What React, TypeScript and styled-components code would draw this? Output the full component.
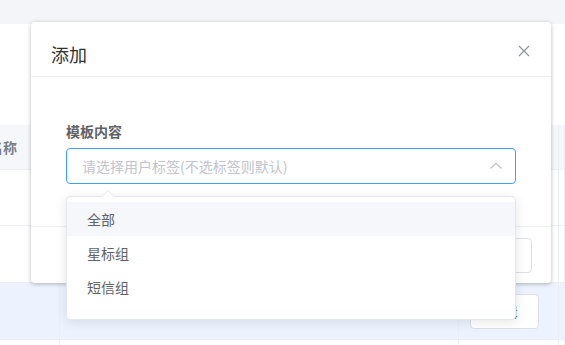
import React from "react";
import styled, { createGlobalStyle } from "styled-components";

const Global = createGlobalStyle`
  html, body { margin: 0; padding: 0; background: #fff; }
  body { font-family: "Noto Sans CJK SC", "Noto Sans", "Liberation Sans", sans-serif; }
  * { box-sizing: border-box; }
`;

const Page = styled.div`
  position: relative;
  width: 565px;
  height: 345px;
  overflow: hidden;
  background: #fff;
`;

const TopBand = styled.div`
  height: 24px;
  background: #f4f5f9;
`;

const FilterArea = styled.div`
  height: 101px;
`;

const Table = styled.div`
  display: grid;
  grid-template-columns: 60px 399px 100px 1fr;
`;

const Cell = styled.div<{ $kind?: "head" | "body" | "hover"; $h: number }>`
  height: ${(p) => p.$h}px;
  border-bottom: 1px solid #ebeef5;
  border-right: 1px solid #ebeef5;
  background: ${(p) =>
    p.$kind === "head" ? "#f5f7fb" : p.$kind === "hover" ? "#ecf3fe" : "#fff"};
  display: flex;
  align-items: center;
  font-size: 14px;
  font-weight: 700;
  color: #7b7e86;
`;

const HeadText = styled.span`
  margin-left: -11px;
  white-space: nowrap;
`;

const RowButton = styled.button`
  margin-left: 11px;
  width: 69px;
  height: 35px;
  border: 1px solid #dcdfe6;
  border-radius: 4px;
  background: #fff;
  color: #4a4d55;
  font-family: inherit;
  font-size: 13px;
  padding: 0;
`;

const Modal = styled.div`
  position: absolute;
  left: 31px;
  top: 22px;
  width: 520px;
  background: #fff;
  border-radius: 4px;
  box-shadow: 0 1px 4px rgba(0, 0, 0, 0.28);
  display: flex;
  flex-direction: column;
`;

const ModalHeader = styled.div`
  padding: 20px 20px 10px;
  border-bottom: 1px solid #ebeef5;
  display: flex;
  align-items: center;
  justify-content: space-between;
`;

const Title = styled.span`
  font-size: 18px;
  line-height: 24px;
  color: #303133;
`;

const CloseBtn = styled.span`
  width: 16px;
  height: 16px;
  margin-right: -1px;
  margin-top: -7px;
  display: flex;
  align-items: center;
  justify-content: center;
`;

const ModalBody = styled.div`
  padding: 44px 35px 20px;
`;

const FormItem = styled.div`
  margin-bottom: 22px;
`;

const Label = styled.div`
  font-size: 14px;
  line-height: 20px;
  font-weight: 700;
  color: #606266;
  margin-bottom: 7px;
`;

const SelectBox = styled.div`
  height: 36px;
  border: 1px solid #409eff;
  border-radius: 4px;
  padding: 0 12px 0 15px;
  display: flex;
  align-items: center;
  justify-content: space-between;
  font-size: 14px;
  color: #c0c4cc;
`;

const ModalFooter = styled.div`
  border-top: 1px solid #ebeef5;
  padding: 11px 19px 10px;
  display: flex;
  justify-content: flex-end;
  gap: 10px;
`;

const FooterButton = styled.button<{ $primary?: boolean }>`
  height: 35px;
  padding: 0 20px;
  border-radius: 4px;
  border: 1px solid ${(p) => (p.$primary ? "#409eff" : "#dcdfe6")};
  background: ${(p) => (p.$primary ? "#409eff" : "#fff")};
  color: ${(p) => (p.$primary ? "#fff" : "#606266")};
  font-family: inherit;
  font-size: 14px;
`;

const Dropdown = styled.div`
  position: absolute;
  left: 66px;
  top: 196px;
  width: 450px;
  background: #fff;
  border: 1px solid #e4e7ed;
  border-radius: 4px;
  box-shadow: 0 2px 12px rgba(0, 0, 0, 0.1);
  padding: 5px 0 15px;

  &::before,
  &::after {
    content: "";
    position: absolute;
    left: 35px;
    width: 0;
    height: 0;
    border: 6px solid transparent;
    border-top-width: 0;
  }
  &::before {
    top: -7px;
    border-bottom-color: #e4e7ed;
  }
  &::after {
    top: -6px;
    border-bottom-color: #fff;
  }
`;

const Option = styled.div<{ $hover?: boolean }>`
  height: 34px;
  line-height: 34px;
  padding: 0 20px;
  font-size: 14px;
  color: #606266;
  background: ${(p) => (p.$hover ? "#f5f7fa" : "#fff")};
`;

export default function App() {
  return (
    <>
      <Global />
      <Page>
        <TopBand />
        <FilterArea />
        <Table>
          <Cell $kind="head" $h={45}>
            <HeadText>名称</HeadText>
          </Cell>
          <Cell $kind="head" $h={45} />
          <Cell $kind="head" $h={45} />
          <Cell $kind="head" $h={45} />
          <Cell $h={56} />
          <Cell $h={56} />
          <Cell $h={56} />
          <Cell $h={56} />
          <Cell $h={57} />
          <Cell $h={57} />
          <Cell $h={57} />
          <Cell $h={57} />
          <Cell $kind="hover" $h={57} />
          <Cell $kind="hover" $h={57} />
          <Cell $kind="hover" $h={57}>
            <RowButton>编辑</RowButton>
          </Cell>
          <Cell $kind="hover" $h={57} />
          <Cell $h={57} />
          <Cell $h={57} />
          <Cell $h={57} />
          <Cell $h={57} />
        </Table>

        <Modal>
          <ModalHeader>
            <Title>添加</Title>
            <CloseBtn>
              <svg width="12" height="12" viewBox="0 0 12 12">
                <path d="M1 1 L11 11 M11 1 L1 11" stroke="#909399" strokeWidth="1.2" fill="none" />
              </svg>
            </CloseBtn>
          </ModalHeader>
          <ModalBody>
            <FormItem>
              <Label>模板内容</Label>
              <SelectBox>
                <span>请选择用户标签(不选标签则默认)</span>
                <svg width="14" height="14" viewBox="0 0 14 14">
                  <path d="M1.5 9.5 L7 4.5 L12.5 9.5" stroke="#c0c4cc" strokeWidth="1.3" fill="none" />
                </svg>
              </SelectBox>
            </FormItem>
          </ModalBody>
          <ModalFooter>
            <FooterButton $primary>确 定</FooterButton>
            <FooterButton>取 消</FooterButton>
          </ModalFooter>
        </Modal>

        <Dropdown>
          <Option $hover>全部</Option>
          <Option>星标组</Option>
          <Option>短信组</Option>
        </Dropdown>
      </Page>
    </>
  );
}
